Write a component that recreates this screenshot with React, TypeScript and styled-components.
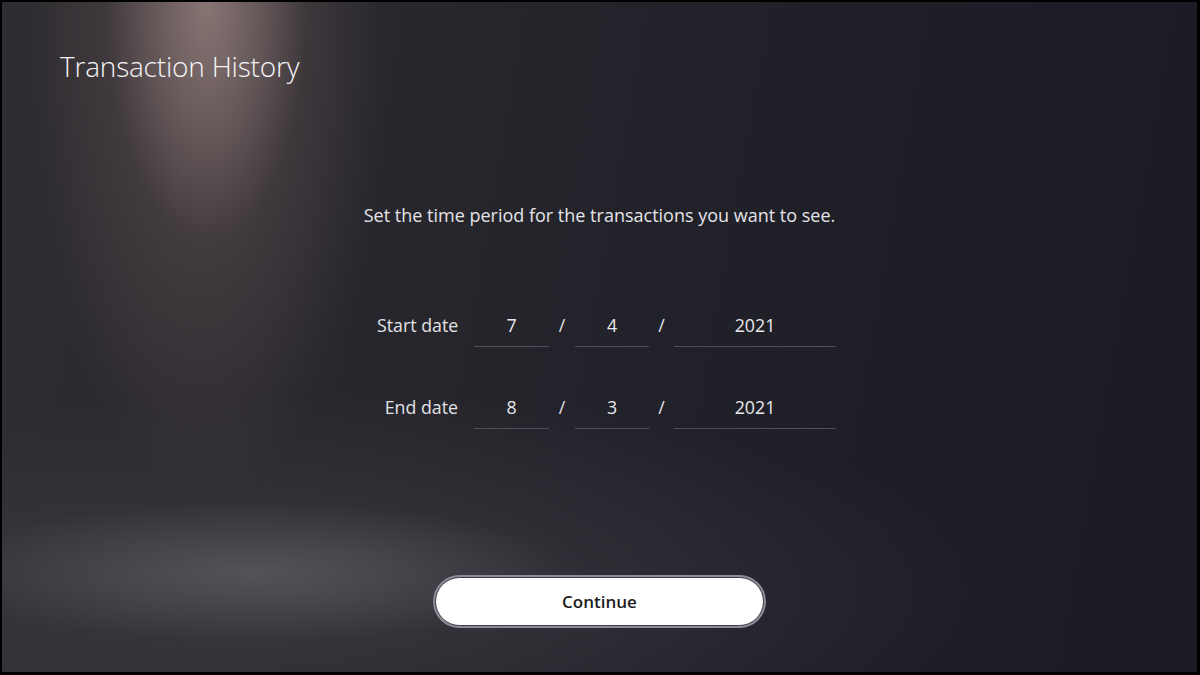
import React from 'react';
import styled, { createGlobalStyle } from 'styled-components';

const GlobalStyle = createGlobalStyle`
    html, body {
        margin: 0;
        padding: 0;
        background: #000;
    }
    body {
        font-family: "Open Sans", "Noto Sans", sans-serif;
        -webkit-font-smoothing: antialiased;
    }
`;

const Screen = styled.div`
    width: 1200px;
    height: 675px;
    box-sizing: border-box;
    border-style: solid;
    border-color: #000;
    border-width: 2px 3px 3px 2px;
    overflow: hidden;
    display: flex;
    flex-direction: column;
    color: #f2f2f4;
    background:
        radial-gradient(ellipse 100px 240px at 205px 0px, rgba(152, 130, 128, 0.75), rgba(152, 130, 128, 0) 100%),
        radial-gradient(ellipse 180px 480px at 205px 20px, rgba(120, 100, 100, 0.55), rgba(120, 100, 100, 0) 100%),
        radial-gradient(ellipse 320px 70px at 250px 570px, rgba(92, 92, 98, 0.75), rgba(92, 92, 98, 0) 100%),
        radial-gradient(ellipse 700px 200px at 300px 590px, rgba(70, 70, 76, 0.55), rgba(70, 70, 76, 0) 100%),
        linear-gradient(100deg, #2f2d31 0%, #28272d 30%, #1f1f28 65%, #1b1b26 100%);
`;

const Header = styled.header`
    padding: 46px 0 0 58px;
`;

const Title = styled.h1`
    margin: 0;
    font-size: 28px;
    font-weight: 300;
    line-height: 36px;
    letter-spacing: -0.2px;
    color: #f4f4f6;
`;

const Main = styled.main`
    display: flex;
    flex-direction: column;
    align-items: center;
`;

const Prompt = styled.p`
    margin: 119px 0 0 0;
    font-size: 18px;
    line-height: 24px;
    font-weight: 400;
    color: #e4e4e8;
`;

const DateForm = styled.div`
    margin: 76px 0 0 14px;
    display: grid;
    grid-template-columns: 97px 75px 26px 74px 25px 162px;
    row-gap: 38px;
    align-items: center;
`;

const Label = styled.div`
    padding-right: 16px;
    text-align: right;
    font-size: 17.8px;
    color: #e2e2e6;
    white-space: nowrap;
`;

const Field = styled.div`
    height: 44px;
    box-sizing: border-box;
    display: flex;
    align-items: center;
    justify-content: center;
    border-bottom: 1.5px solid #4f4f58;
    font-size: 17.8px;
    color: #e8e8ec;
`;

const Sep = styled.div`
    text-align: center;
    font-size: 17.8px;
    color: #e2e2e6;
`;

const Button = styled.button`
    margin-top: 148px;
    width: 329px;
    height: 49px;
    border-radius: 25px;
    background: #fff;
    border: 1px solid #3a3a42;
    box-shadow: 0 0 0 2px #8f8c9a;
    font-family: "Open Sans", "Noto Sans", sans-serif;
    font-size: 17px;
    font-weight: 600;
    color: #1c1c20;
    cursor: pointer;
`;

const rows = [
    { label: 'Start date', month: '7', day: '4', year: '2021' },
    { label: 'End date', month: '8', day: '3', year: '2021' },
];

export default function App() {
    return (
        <>
            <GlobalStyle />
            <Screen>
                <Header>
                    <Title>Transaction History</Title>
                </Header>
                <Main>
                    <Prompt>Set the time period for the transactions you want to see.</Prompt>
                    <DateForm>
                        {rows.map(r => (
                            <React.Fragment key={r.label}>
                                <Label>{r.label}</Label>
                                <Field>{r.month}</Field>
                                <Sep>/</Sep>
                                <Field>{r.day}</Field>
                                <Sep>/</Sep>
                                <Field>{r.year}</Field>
                            </React.Fragment>
                        ))}
                    </DateForm>
                    <Button>Continue</Button>
                </Main>
            </Screen>
        </>
    );
}
